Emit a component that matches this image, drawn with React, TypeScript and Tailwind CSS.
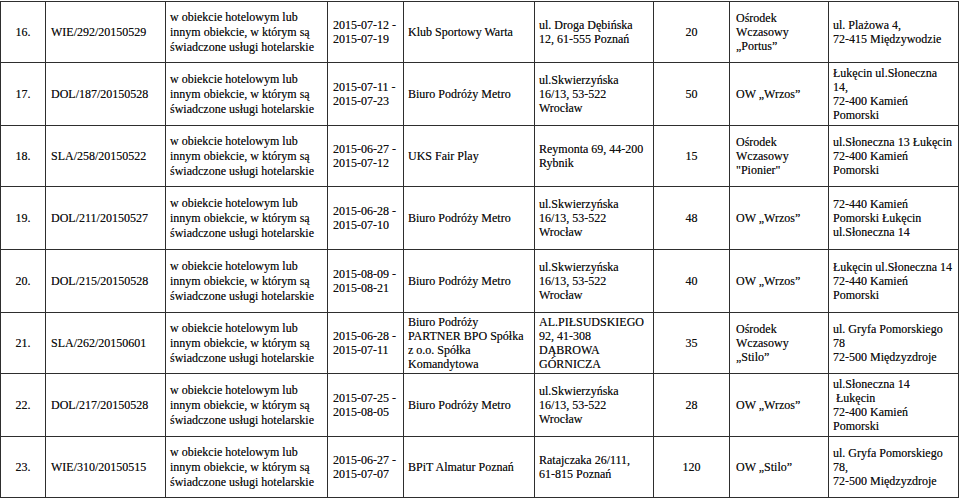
import React from 'react';

type Row = {
  no: string;
  code: string;
  dates: string[];
  org: string[];
  orgAddr: string[];
  count: string;
  place: string[];
  placeAddr: string[];
  h: string;
};

const KIND = ['w obiekcie hotelowym lub', 'innym obiekcie, w którym są', 'świadczone usługi hotelarskie'];
const METRO_ADDR = ['ul.Skwierzyńska', '16/13, 53-522', 'Wrocław'];

const rows: Row[] = [
  {
    no: '16.', code: 'WIE/292/20150529', dates: ['2015-07-12 -', '2015-07-19'],
    org: ['Klub Sportowy Warta'], orgAddr: ['ul. Droga Dębińska', '12, 61-555 Poznań'], count: '20',
    place: ['Ośrodek', 'Wczasowy', '„Portus”'], placeAddr: ['ul. Plażowa 4,', '72-415 Międzywodzie'], h: 'h-[61px]',
  },
  {
    no: '17.', code: 'DOL/187/20150528', dates: ['2015-07-11 -', '2015-07-23'],
    org: ['Biuro Podróży Metro'], orgAddr: METRO_ADDR, count: '50',
    place: ['OW „Wrzos”'], placeAddr: ['Łukęcin ul.Słoneczna', '14,', '72-400 Kamień', 'Pomorski'], h: 'h-[63px]',
  },
  {
    no: '18.', code: 'SLA/258/20150522', dates: ['2015-06-27 -', '2015-07-12'],
    org: ['UKS Fair Play'], orgAddr: ['Reymonta 69, 44-200', 'Rybnik'], count: '15',
    place: ['Ośrodek', 'Wczasowy', '"Pionier"'], placeAddr: ['ul.Słoneczna 13 Łukęcin', '72-400 Kamień', 'Pomorski'], h: 'h-[61px]',
  },
  {
    no: '19.', code: 'DOL/211/20150527', dates: ['2015-06-28 -', '2015-07-10'],
    org: ['Biuro Podróży Metro'], orgAddr: METRO_ADDR, count: '48',
    place: ['OW „Wrzos”'], placeAddr: ['72-440 Kamień', 'Pomorski Łukęcin', 'ul.Słoneczna 14'], h: 'h-[63px]',
  },
  {
    no: '20.', code: 'DOL/215/20150528', dates: ['2015-08-09 -', '2015-08-21'],
    org: ['Biuro Podróży Metro'], orgAddr: METRO_ADDR, count: '40',
    place: ['OW „Wrzos”'], placeAddr: ['Łukęcin ul.Słoneczna 14', '72-440 Kamień', 'Pomorski'], h: 'h-[63px]',
  },
  {
    no: '21.', code: 'SLA/262/20150601', dates: ['2015-06-28 -', '2015-07-11'],
    org: ['Biuro Podróży', 'PARTNER BPO Spółka', 'z o.o. Spółka', 'Komandytowa'],
    orgAddr: ['AL.PIŁSUDSKIEGO', '92, 41-308', 'DĄBROWA', 'GÓRNICZA'], count: '35',
    place: ['Ośrodek', 'Wczasowy', '„Stilo”'], placeAddr: ['ul. Gryfa Pomorskiego', '78', '72-500 Międzyzdroje'], h: 'h-[61px]',
  },
  {
    no: '22.', code: 'DOL/217/20150528', dates: ['2015-07-25 -', '2015-08-05'],
    org: ['Biuro Podróży Metro'], orgAddr: METRO_ADDR, count: '28',
    place: ['OW „Wrzos”'], placeAddr: ['ul.Słoneczna 14', '\u00a0Łukęcin', '72-400 Kamień', 'Pomorski'], h: 'h-[63px]',
  },
  {
    no: '23.', code: 'WIE/310/20150515', dates: ['2015-06-27 -', '2015-07-07'],
    org: ['BPiT Almatur Poznań'], orgAddr: ['Ratajczaka 26/111,', '61-815 Poznań'], count: '120',
    place: ['OW „Stilo”'], placeAddr: ['ul. Gryfa Pomorskiego', '78,', '72-500 Międzyzdroje'], h: 'h-[61px]',
  },
];

// one line per entry, no wrapping
const Lines = ({ lines }: { lines: string[] }) => (
  <>
    {lines.map((l, i) => (
      <div key={i} className="whitespace-nowrap">{l}</div>
    ))}
  </>
);

const cell = 'border border-[#2e2e2e] align-middle px-[4px] py-0';

export default function App() {
  return (
    <div className="w-[960px] h-[499px] bg-white overflow-hidden font-['Liberation_Serif','Times_New_Roman',serif] text-[12px] leading-[14px] text-[#111] [text-shadow:0_0_0.5px_rgba(0,0,0,0.55)]">
      <table className="table-fixed border-collapse w-[958px] mt-px">
        <colgroup>
          <col className="w-[45px]" />
          <col className="w-[120px]" />
          <col className="w-[162px]" />
          <col className="w-[76px]" />
          <col className="w-[131px]" />
          <col className="w-[119px]" />
          <col className="w-[76px]" />
          <col className="w-[99px]" />
          <col className="w-[130px]" />
        </colgroup>
        <tbody>
          {rows.map((r) => (
            <tr key={r.no} className={r.h}>
              <td className={`${cell} text-center`}>{r.no}</td>
              <td className={`${cell} pl-[5px]`}>{r.code}</td>
              <td className={`${cell} leading-[15px]`}><Lines lines={KIND} /></td>
              <td className={`${cell} pl-[5px]`}><Lines lines={r.dates} /></td>
              <td className={cell}><Lines lines={r.org} /></td>
              <td className={cell}><Lines lines={r.orgAddr} /></td>
              <td className={`${cell} text-center`}>{r.count}</td>
              <td className={`${cell} pl-[6px]`}><Lines lines={r.place} /></td>
              <td className={cell}><Lines lines={r.placeAddr} /></td>
            </tr>
          ))}
        </tbody>
      </table>
    </div>
  );
}
